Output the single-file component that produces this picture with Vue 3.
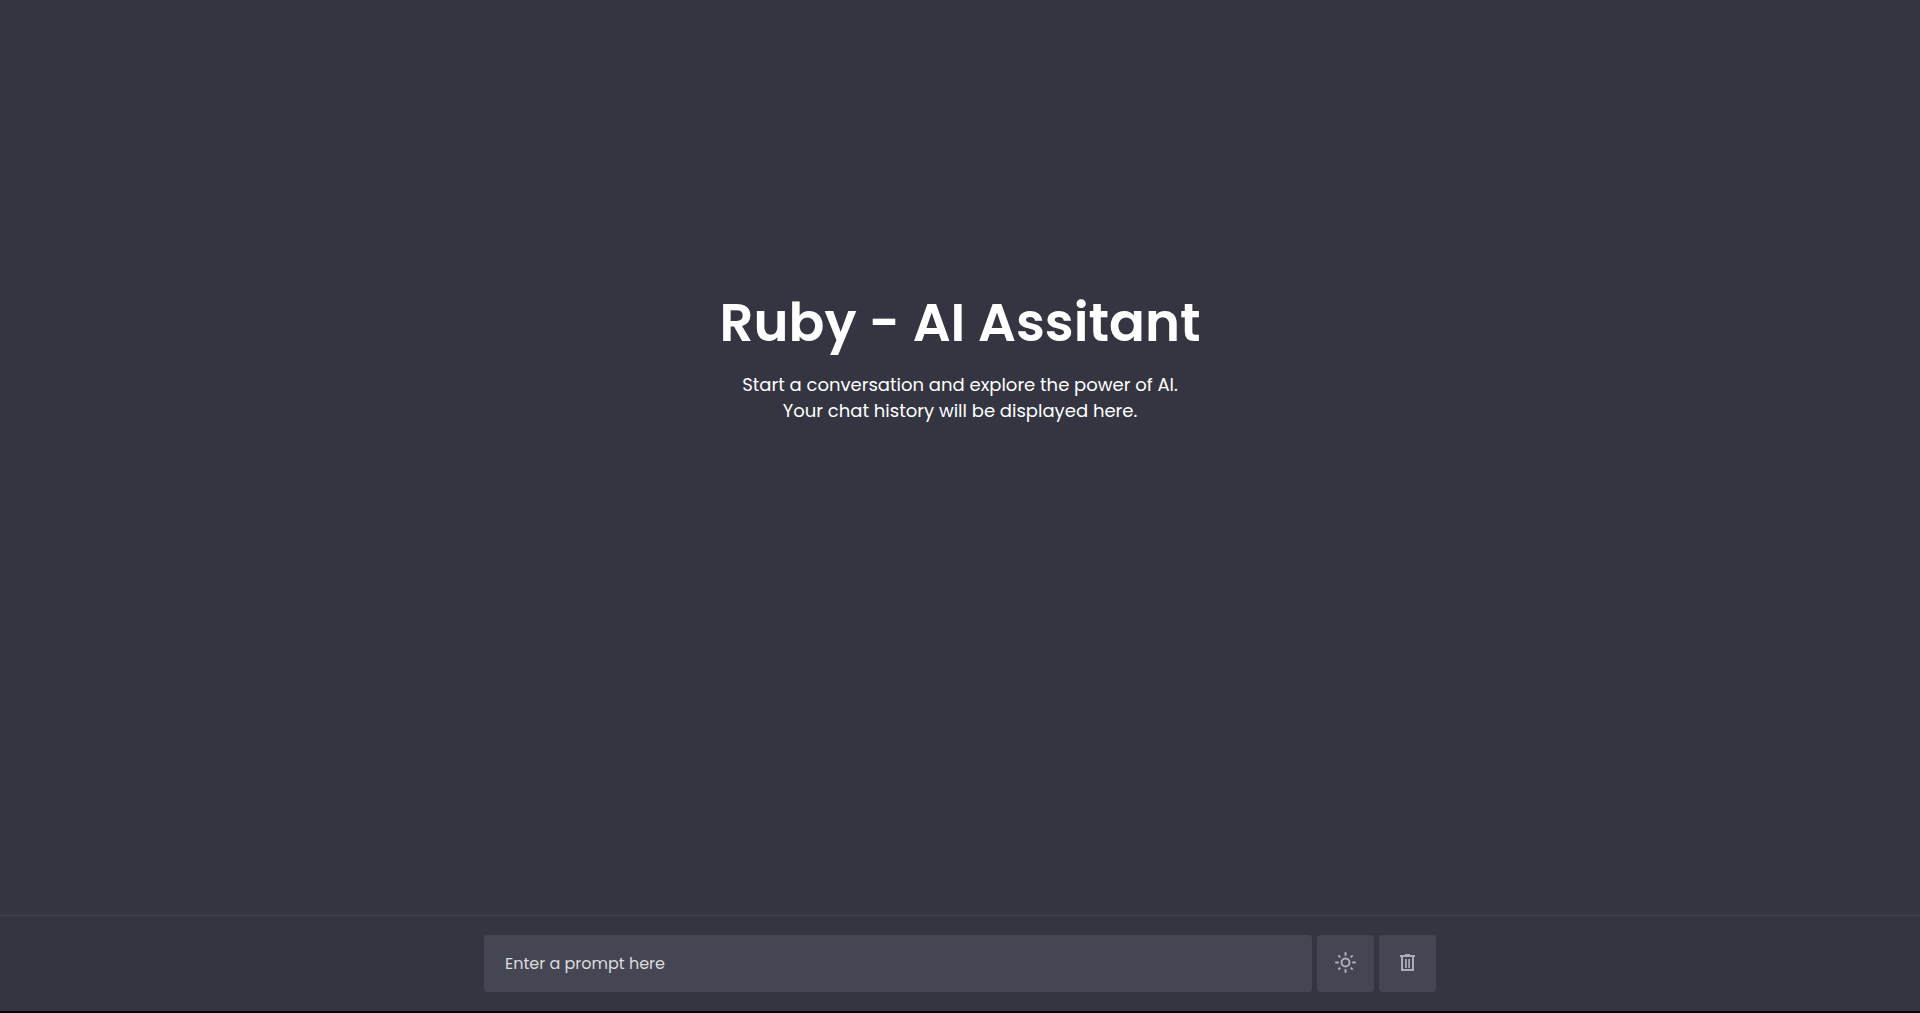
<script setup>
import { ref } from 'vue'

const prompt = ref('')
const rays = [0, 45, 90, 135, 180, 225, 270, 315]
</script>

<template>
  <div class="app">
    <main class="chat">
      <h1>Ruby - AI Assitant</h1>
      <p>Start a conversation and explore the power of AI.<br />Your chat history will be displayed here.</p>
    </main>
    <footer class="typing">
      <form class="controls" @submit.prevent>
        <input v-model="prompt" type="text" placeholder="Enter a prompt here" aria-label="Prompt" />
        <button type="button" aria-label="Toggle theme">
          <svg viewBox="0 0 21 21" fill="none" stroke="currentColor" stroke-width="2">
            <circle cx="10.5" cy="10.5" r="4" />
            <path v-for="r in rays" :key="r" :d="r % 90 ? 'M10.5 0.4V3.2' : 'M10.5 0.2V3.8'" :transform="`rotate(${r} 10.5 10.5)`" />
          </svg>
        </button>
        <button type="button" aria-label="Delete chats">
          <svg viewBox="0 0 21 21" fill="none" stroke="currentColor" stroke-width="2">
            <path d="M3 4H18M8 3H13M5 4V18H16V4" />
            <path stroke-width="1.7" d="M8.9 7V16M12.1 7V16" />
          </svg>
        </button>
      </form>
    </footer>
  </div>
</template>

<style>
body {
  background: #000;
}
</style>

<style scoped>
.app {
  box-sizing: border-box;
  min-height: calc(100vh - 2px);
  display: flex;
  flex-direction: column;
  background: #343541;
  font-family: Poppins, Inter, sans-serif;
  color: #fff;
}
.chat {
  flex: 1;
  display: flex;
  flex-direction: column;
  align-items: center;
  justify-content: center;
  padding: 0 10px 208px;
  text-align: center;
}
h1 {
  margin: 0;
  font-size: 53px;
  font-weight: 600;
  line-height: 80px;
}
p {
  margin: 9px 0 0;
  font-size: 18px;
  line-height: 26px;
}
.typing {
  display: flex;
  justify-content: center;
  padding: 19px 10px;
  border-top: 1px solid #444654;
}
.controls {
  display: flex;
  gap: 5px;
  width: 100%;
  max-width: 952px;
}
input,
button {
  box-sizing: border-box;
  height: 57px;
  border: 0;
  border-radius: 4px;
  background: #444654;
}
input {
  flex: 1;
  min-width: 0;
  padding: 0 21px;
  font: 16px Poppins, Inter, sans-serif;
  color: #fff;
  outline: none;
}
input::placeholder {
  color: #dcdcdc;
  opacity: 1;
}
button {
  display: flex;
  align-items: center;
  justify-content: center;
  width: 57px;
  padding: 0 0 2px;
  color: #acacbe;
  cursor: pointer;
}
svg {
  width: 21px;
  height: 21px;
}
</style>
